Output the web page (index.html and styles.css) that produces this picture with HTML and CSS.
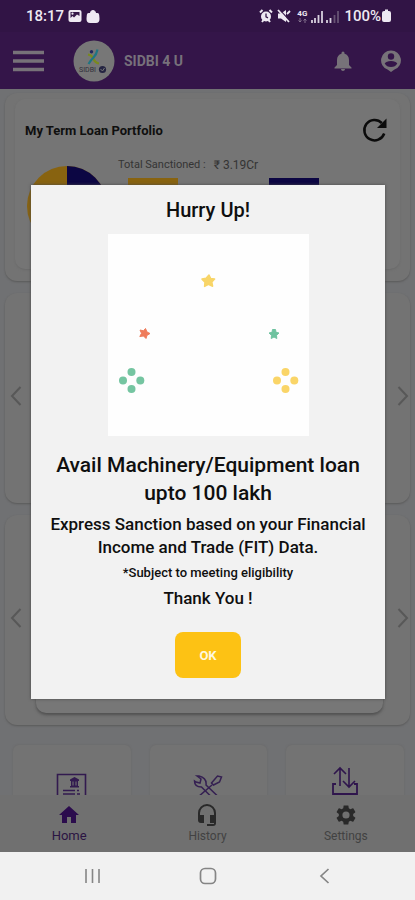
FILE: index.html
```html
<!DOCTYPE html>
<html lang="en">
<head>
<meta charset="utf-8">
<meta name="viewport" content="width=device-width, initial-scale=1">
<title>SIDBI 4 U</title>
<link rel="stylesheet" href="styles.css">
</head>
<body>
<div class="screen">
  <div class="status">
    <span class="status-time">18:17</span>
    <svg width="14" height="14" viewBox="0 0 14 14"><rect x="0.5" y="1" width="13" height="12" rx="2" fill="#eee9f2"/><path d="M2.500 3h9v4L9 5.500 6 8.500 4.500 7l-2 2z" fill="#351748"/><circle cx="4.500" cy="4.700" r="1.100" fill="#eee9f2"/></svg>
    <svg class="bag" width="14" height="15" viewBox="0 0 14 15"><path d="M4.500 5V4a2.500 2.500 0 0 1 5 0v1z" fill="#eee9f2" stroke="#eee9f2"/><path d="M2.500 4h9q1.500 0 1.700 2l.3 4q0 4-3.500 4H4q-3.500 0-3.500-4l.3-4q.2-2 1.700-2z" fill="#eee9f2"/></svg>
    <span class="push"></span>
    <svg width="14" height="14" viewBox="0 0 14 14"><circle cx="7" cy="7.500" r="5" fill="#eee9f2"/><path d="M1 3.500L3.500 1M13 3.500L10.500 1M3 13l1.500-2M11 13l-1.500-2" stroke="#eee9f2" stroke-width="2"/><path d="M7 4.500v3.300l2 1" fill="none" stroke="#351748" stroke-width="1.300"/></svg>
    <svg class="mute" width="14" height="14" viewBox="0 0 14 14"><path d="M1 4.500h3l5-3.500v12L4 9.500H1z" fill="#eee9f2"/><path d="M2 0l11 12" stroke="#351748" stroke-width="1.200"/><path d="M1 1l11 12M10 5l3-3" stroke="#eee9f2" stroke-width="1.800"/></svg>
    <span class="network"><b>4G</b><svg width="9" height="5" viewBox="0 0 9 5"><path d="M2 0v4M0.500 2.500L2 4l1.500-1.500M7 5V1M5.500 2.500L7 1l1.500 1.500" fill="none" stroke="#85738f"/></svg></span>
    <svg width="12" height="13" viewBox="0 0 12 13"><path d="M1 10v3M4 8v5M7.500 5v8M11 1v12" stroke="#d8d0de" stroke-width="1.800"/></svg>
    <svg class="signal" width="14" height="13" viewBox="0 0 14 13"><path d="M1 10v3M4.500 8v5" stroke="#d8d0de" stroke-width="1.800"/><path d="M8.500 5v8M12 1v12" stroke="#665373" stroke-width="1.800"/></svg>
    <span class="status-percent">100%</span>
    <svg width="9" height="14" viewBox="0 0 9 14"><path d="M3 0.500h3V2h1q2 0 2 2v7q0 2-2 2H2q-2 0-2-2V4q0-2 2-2h1z" fill="#eee9f2"/></svg>
  </div>

  <header class="appbar">
    <button class="icon-button" aria-label="Menu"><svg width="32" height="24" viewBox="0 0 32 24"><path d="M0 3.500h31M0 12h31M0 20.500h31" stroke="#777279" stroke-width="3.400"/></svg></button>
    <svg class="logo" width="42" height="42" viewBox="0 0 42 42"><circle cx="21" cy="21" r="20.500" fill="#777777"/><path d="M15 14.500q3.500.5 5 3.500 2 5 6 5.500" fill="none" stroke="#7a8a1e" stroke-width="2.200"/><path d="M24.500 9.500q-1 5-4 8t-5 6.500" fill="none" stroke="#1f7583" stroke-width="2.200"/><circle cx="18.500" cy="11.800" r="1.700" fill="#22285d"/><text x="6" y="32" class="logo-text">SIDBI</text><circle cx="29.500" cy="29.500" r="3.600" fill="#252542"/><path d="M27.500 29l2 2 2-3" fill="none" stroke="#777" stroke-width="1"/></svg>
    <h1>SIDBI 4 U</h1>
    <span class="push"></span>
    <button class="icon-button" aria-label="Notifications"><svg width="24" height="24" viewBox="0 0 24 24"><path d="M12 22c1.100 0 2-.9 2-2h-4c0 1.100.9 2 2 2zm6-6v-5c0-3.100-1.600-5.600-4.500-6.300V4a1.500 1.500 0 0 0-3 0v.7C7.600 5.400 6 7.900 6 11v5l-2.500 2.500v1h17v-1z" fill="#777279"/></svg></button>
    <button class="icon-button" aria-label="Account"><svg width="22" height="24" viewBox="0 0 22 24"><path d="M11 1.500a9.800 9.800 0 0 0-3.500 19L11 23l3.500-2.500a9.800 9.800 0 0 0-3.500-19z" fill="#777279"/><circle cx="11" cy="7.500" r="3.200" fill="#341549"/><path d="M4.700 14.500q1.500-2.500 6.300-2.500t6.300 2.500q-2 3.500-6.300 3.500t-6.300-3.500z" fill="#341549"/></svg></button>
  </header>

  <main class="content">
    <section class="panel portfolio">
      <div class="portfolio-card">
        <div class="portfolio-head">
          <h2>My Term Loan Portfolio</h2>
          <button class="icon-button" aria-label="Refresh"><svg width="26" height="26" viewBox="0 0 26 26"><path d="M22.200 16.500A10.200 10.200 0 1 1 19.800 6" fill="none" stroke="#0b0b0b" stroke-width="2.500"/><path d="M24.500 1.500v9.500h-9.500z" fill="#0b0b0b"/></svg></button>
        </div>
        <div class="portfolio-body">
          <svg class="pie" width="80" height="80" viewBox="0 0 80 80"><circle cx="40" cy="40" r="40" fill="#886310"/><path d="M40 0a40 40 0 0 1 0 80z" fill="#0c0643"/></svg>
          <div class="figures">
            <p class="total"><span>Total Sanctioned :</span><span>₹ 3.19Cr</span></p>
            <div class="legend"><span class="swatch gold"></span><span class="swatch navy"></span></div>
          </div>
        </div>
      </div>
    </section>

    <section class="panel carousel">
      <button class="icon-button" aria-label="Previous product"><svg width="12" height="20" viewBox="0 0 12 20"><path d="M10.500 1L2 10l8.500 9" fill="none" stroke="#585858" stroke-width="2"/></svg></button>
      <button class="icon-button" aria-label="Next product"><svg width="12" height="20" viewBox="0 0 12 20"><path d="M1.500 1L10 10l-8.500 9" fill="none" stroke="#585858" stroke-width="2"/></svg></button>
    </section>

    <section class="panel carousel">
      <button class="icon-button" aria-label="Previous offer"><svg width="12" height="20" viewBox="0 0 12 20"><path d="M10.500 1L2 10l8.500 9" fill="none" stroke="#585858" stroke-width="2"/></svg></button>
      <div class="slide"></div>
      <button class="icon-button" aria-label="Next offer"><svg width="12" height="20" viewBox="0 0 12 20"><path d="M1.500 1L10 10l-8.500 9" fill="none" stroke="#585858" stroke-width="2"/></svg></button>
    </section>

    <section class="tiles">
      <a href="#" class="tile" aria-label="Certificates"><svg width="32" height="36" viewBox="0 0 32 36"><path d="M1.500 36V8.500h28V36" fill="none" stroke="#321a4f" stroke-width="1.600"/><path d="M14 13.500l4.500-2.500 4.500 2.500v1.500h-9zM15 15h7v5h-7zM14 20h9v1.500h-9z" fill="#321a4f"/><path d="M17 15.500v4M20 15.500v4" stroke="#777" stroke-width="1"/><path d="M7 24.500h12M21 24.500h2M7 28h12M21 28h3" stroke="#321a4f" stroke-width="1.500"/></svg></a>
      <a href="#" class="tile" aria-label="Services"><svg width="30" height="36" viewBox="0 0 30 36"><path d="M4 10l4 3-1 4-4-1-1.500-1q0 6 7 6l10 10q4 2 5-2L13 19q1-7-7-9z" fill="none" stroke="#352052" stroke-width="1.500"/><path d="M28.500 11l-4-1-6 7 2 2 6-3zM19 19l-14 12q-3 4 1 5l6-6" fill="none" stroke="#352052" stroke-width="1.500"/></svg></a>
      <a href="#" class="tile" aria-label="Transfers"><svg width="28" height="36" viewBox="0 0 28 36"><path d="M5 18H2v10h24V18h-3" fill="none" stroke="#2f154d" stroke-width="1.800"/><path d="M9 20V3M3 8l6-6 6 6M18 2v18M12 15l6 6 6-6" fill="none" stroke="#2f154d" stroke-width="1.600"/></svg></a>
    </section>
  </main>

  <nav class="tabs">
    <a href="#" class="tab active"><svg width="24" height="24" viewBox="0 0 24 24"><path d="M10 20v-6h4v6h5v-8h3L12 3 2 12h3v8z" fill="#2b0c4d"/></svg><span>Home</span></a>
    <a href="#" class="tab"><svg width="24" height="24" viewBox="0 0 24 24"><path d="M12 1a9 9 0 0 0-9 9v7a3 3 0 0 0 3 3h3v-8H5v-2a7 7 0 0 1 14 0v2h-4v8h4v1h-7v2h6a3 3 0 0 0 3-3V10a9 9 0 0 0-9-9z" fill="#292929"/></svg><span>History</span></a>
    <a href="#" class="tab"><svg width="24" height="24" viewBox="0 0 24 24"><path fill="#292929" d="M19.140 12.940c.04-.3.06-.61.06-.94 0-.32-.02-.64-.07-.94l2.030-1.580c.18-.14.23-.41.12-.61l-1.920-3.320c-.12-.22-.37-.29-.59-.22l-2.390.96c-.5-.38-1.030-.7-1.620-.94l-.36-2.540c-.04-.24-.24-.41-.48-.41h-3.840c-.24 0-.43.17-.47.41l-.36 2.540c-.59.24-1.130.57-1.620.94l-2.390-.96c-.22-.08-.47 0-.59.22L2.740 8.870c-.12.21-.08.47.12.61l2.030 1.580c-.05.3-.09.63-.09.94s.02.64.07.94l-2.030 1.580c-.18.14-.23.41-.12.61l1.920 3.320c.12.22.37.29.59.22l2.390-.96c.5.38 1.030.7 1.620.94l.36 2.540c.05.24.24.41.48.41h3.840c.24 0 .44-.17.47-.41l.36-2.540c.59-.24 1.130-.56 1.620-.94l2.390.96c.22.08.47 0 .59-.22l1.920-3.320c.12-.22.07-.47-.12-.61zM12 15.600a3.600 3.600 0 1 1 0-7.200 3.600 3.600 0 0 1 0 7.200z"/></svg><span>Settings</span></a>
  </nav>

  <div class="sysnav">
    <button class="icon-button" aria-label="Recent apps"><svg width="18" height="18" viewBox="0 0 18 18"><path d="M3 2v14M9.500 2v14M16 2v14" stroke="#858585" stroke-width="1.600"/></svg></button>
    <button class="icon-button" aria-label="Home screen"><svg width="18" height="18" viewBox="0 0 18 18"><rect x="1.500" y="1.500" width="15" height="15" rx="4.500" fill="none" stroke="#858585" stroke-width="1.700"/></svg></button>
    <button class="icon-button" aria-label="Back"><svg width="18" height="18" viewBox="0 0 18 18"><path d="M13.500 2L6 9l7.500 7" fill="none" stroke="#858585" stroke-width="1.700"/></svg></button>
  </div>

  <div class="overlay">
    <div class="dialog" role="dialog" aria-modal="true" aria-labelledby="dialog-title">
      <h2 id="dialog-title">Hurry Up!</h2>
      <svg class="confetti" width="201" height="202" viewBox="0 0 201 202">
        <rect width="201" height="202" fill="#fefefe"/>
        <path d="M101 41l1.700 3.600 3.900.5-2.800 2.900.8 4.200-4.200-1.800-3.800 2 .4-4.300-3-3 4.100-.8z" fill="#f8d568" stroke="#f8d568" stroke-width="1.500" stroke-linejoin="round"/>
        <path d="M37.500 94.500l1.500 3.500 3 1.500-3 1.800-1 3.200-2.500-2.500-3.700.5 1.700-3.200-1.500-3.300 3.500.8z" fill="#ef7c5b" stroke="#ef7c5b" stroke-linejoin="round"/>
        <path d="M166 103l-2.800 1.500.3-3.200-2.500-2.300 3-.7.500-2.800h3l.5 2.800 3 .7-2.500 2.300.3 3.200z" fill="#6fc3a0" stroke="#6fc3a0" stroke-linejoin="round"/>
        <g fill="#75c5a1"><circle cx="23.500" cy="138" r="4"/><circle cx="15" cy="146.500" r="4"/><circle cx="32.300" cy="146.500" r="4"/><circle cx="23.500" cy="155" r="4"/></g>
        <g fill="#fad568"><circle cx="177.500" cy="138" r="4"/><circle cx="169" cy="146.500" r="4"/><circle cx="186.300" cy="146.500" r="4"/><circle cx="177.500" cy="155" r="4"/></g>
      </svg>
      <p class="offer">Avail Machinery/Equipment loan upto 100 lakh</p>
      <p class="detail">Express Sanction based on your Financial Income and Trade (FIT) Data.</p>
      <p class="note">*Subject to meeting eligibility</p>
      <p class="thanks">Thank You !</p>
      <button class="ok">OK</button>
    </div>
  </div>
</div>
</body>
</html>
```
FILE: styles.css
```css
* { box-sizing: border-box; }

body {
  margin: 0;
  background: #737373;
  color: #0f0f0f;
  font-family: Roboto, "Liberation Sans", sans-serif;
}

h1, h2, p { margin: 0; }
a { color: inherit; text-decoration: none; }
svg { display: block; flex: none; }

.icon-button {
  display: flex;
  padding: 0;
  border: 0;
  background: none;
}

.push { flex: 1; }

.screen {
  position: relative;
  display: flex;
  flex-direction: column;
  height: 100vh;
  overflow: hidden;
}

.status {
  display: flex;
  flex: none;
  align-items: center;
  height: 32px;
  padding: 0 24px 0 26px;
  background: #311445;
  color: #eee9f2;
}
.status-time { margin-right: 4px; font-size: 15px; font-weight: 500; }
.bag { margin-left: 4px; }
.mute { margin-left: 4px; }
.network {
  display: flex;
  flex-direction: column;
  align-items: center;
  margin: 0 4px 0 6px;
  font-size: 8px;
  line-height: 8px;
}
.signal { margin-left: 3px; }
.status-percent { margin: 0 1px 0 4px; font-size: 15px; font-weight: 500; }

.appbar {
  display: flex;
  flex: none;
  align-items: center;
  height: 57px;
  padding: 0 13px;
  background: #341549;
  color: #77717b;
}
.logo { margin: 0 9px 0 28px; }
.logo-text { font-size: 7px; fill: #30303a; }
.appbar h1 { font-size: 14px; font-weight: 700; }
.appbar .icon-button + .icon-button { margin-left: 25px; }

.content {
  display: flex;
  flex: 1;
  flex-direction: column;
  gap: 12px;
  min-height: 0;
  padding: 4px 5px 0;
  overflow: hidden;
  background: #707173;
}

.panel {
  flex: none;
  border-radius: 12px;
  background: #737373;
  box-shadow: 0 1px 2px #5a5a5a;
}

.portfolio { padding: 6px 10px 12px; }
.portfolio-card {
  height: 170px;
  padding: 18px 12px 0 10px;
  border-radius: 10px;
  background: #757575;
  box-shadow: 0 1px 2px #6a6a6a;
}
.portfolio-head {
  display: flex;
  align-items: center;
  justify-content: space-between;
}
.portfolio-head h2 { font-size: 13px; font-weight: 700; }
.portfolio-body { display: flex; gap: 11px; padding: 14px 0 0 2px; }
.pie { margin-top: 9px; }
.total {
  display: flex;
  gap: 8px;
  color: #343434;
  font-size: 12px;
  line-height: 16px;
}
.total span:first-child { font-size: 11px; }
.legend { display: flex; gap: 91px; padding: 5px 0 0 10px; }
.swatch { width: 50px; height: 16px; }
.gold { background: #886310; }
.navy { background: #0c0643; }

.carousel {
  display: flex;
  align-items: center;
  justify-content: space-between;
  height: 210px;
  padding: 0 1px 4px 5px;
}
.slide {
  flex: 1;
  align-self: stretch;
  margin: 12px 14px 8px;
  border-radius: 10px;
  background: #777777;
  box-shadow: 0 2px 3px #505050;
}

.tiles {
  display: grid;
  flex: none;
  grid-template-columns: repeat(3, 1fr);
  gap: 19px;
  padding: 8px 6px 0 8px;
}
.tile {
  display: flex;
  justify-content: center;
  height: 110px;
  padding-top: 21px;
  border-radius: 6px;
  background: #737373;
  box-shadow: 0 0 2px #666666;
}

.tabs {
  display: grid;
  flex: none;
  grid-template-columns: repeat(3, 1fr);
  height: 57px;
  background: #707070;
}
.tab {
  display: flex;
  flex-direction: column;
  align-items: center;
  padding-top: 8px;
  color: #424242;
  font-size: 12px;
  line-height: 18px;
}
.active { color: #2b1443; font-size: 13px; }

.sysnav {
  display: grid;
  flex: none;
  grid-template-columns: repeat(3, 116px);
  justify-content: center;
  justify-items: center;
  align-items: center;
  height: 48px;
  background: #f1f1f1;
}

.overlay {
  position: absolute;
  inset: 32px 0 48px;
  display: flex;
  align-items: center;
  justify-content: center;
  padding: 0 30px 0 31px;
}
.dialog {
  display: flex;
  flex: 1;
  flex-direction: column;
  align-items: center;
  padding: 12px 10px 21px;
  background: #f2f2f2;
  box-shadow: 0 0 3px #4a4a4a;
  text-align: center;
}
.dialog h2 { font-size: 20px; font-weight: 500; line-height: 26px; }
.confetti { margin: 11px 0 15px; }
.offer { font-size: 21px; font-weight: 500; line-height: 28px; }
.detail { margin-top: 6px; font-size: 17px; font-weight: 500; line-height: 23px; }
.note { margin-top: 6px; font-size: 13px; font-weight: 500; line-height: 16px; }
.thanks { margin-top: 6px; font-size: 17px; font-weight: 500; line-height: 23px; }
.ok {
  width: 66px;
  height: 46px;
  margin-top: 22px;
  border: 0;
  border-radius: 8px;
  background: #fdc214;
  color: #fff8df;
  font: 700 13px Roboto, "Liberation Sans", sans-serif;
}
```
